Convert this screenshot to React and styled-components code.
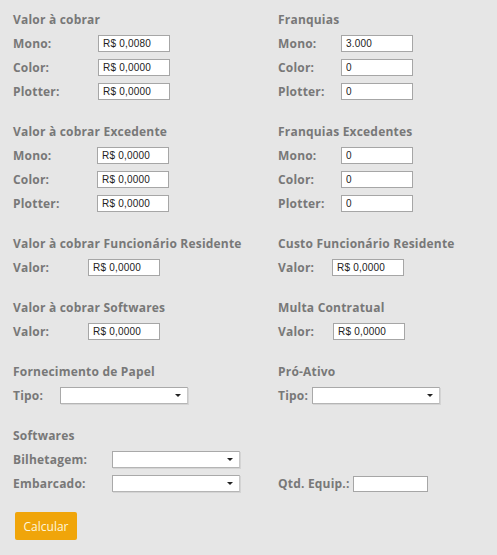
import React from "react";
import styled, { createGlobalStyle } from "styled-components";

const Global = createGlobalStyle`
  html, body { margin: 0; padding: 0; background: #e6e6e6; }
  body { font-family: "Open Sans", "Liberation Sans", sans-serif; }
`;

const Page = styled.div`
  background: #e6e6e6;
  min-height: 555px;
  box-sizing: border-box;
  padding: 12px 0 0 13px;
`;

const Grid = styled.div`
  display: grid;
  grid-template-columns: 265px 200px;
  row-gap: 24px;
`;

const Section = styled.div`
  display: flex;
  flex-direction: column;
`;

const Title = styled.div`
  height: 16px;
  line-height: 16px;
  font-size: 12px;
  font-weight: 700;
  letter-spacing: 0.2px;
  color: #787878;
  white-space: nowrap;
  margin-bottom: 7px;
`;

const Rows = styled.div`
  display: flex;
  flex-direction: column;
  gap: 7px;
`;

const Row = styled.div`
  display: flex;
  align-items: center;
  height: 17px;
`;

const Label = styled.span`
  width: ${(p) => (p.$w ? `${p.$w}px` : "auto")};
  flex: none;
  font-size: 12px;
  font-weight: 700;
  letter-spacing: 0.2px;
  color: #787878;
  white-space: nowrap;
`;

const Input = styled.input`
  box-sizing: border-box;
  width: ${(p) => p.$w || 72}px;
  height: ${(p) => p.$h || 17}px;
  margin: 0;
  border: 1px solid #a6a6a6;
  background: #fff;
  padding: 0 0 0 4px;
  font-family: "Liberation Sans", Arial, sans-serif;
  font-size: 10px;
  letter-spacing: 0.2px;
  color: #222;
  outline: none;
`;

const SelectBox = styled.div`
  position: relative;
  box-sizing: border-box;
  width: 128px;
  height: 17px;
  background: #fff;
  border-top: 1px solid #a9a9a9;
  border-left: 1px solid #a9a9a9;
  border-right: 1px solid #c8c8c8;
  border-bottom: 1px solid #b5b5b5;
  box-shadow: 1px 1px 0 #d4d4d4;
  &::after {
    content: "";
    position: absolute;
    right: 6px;
    top: 6px;
    border-left: 3px solid transparent;
    border-right: 3px solid transparent;
    border-top: 3px solid #222;
  }
`;

const Button = styled.button`
  margin-top: 20px;
  width: 62px;
  height: 28px;
  border: none;
  border-radius: 2px;
  background: #f0a50a;
  color: #fff6dc;
  font-family: "Open Sans", "Liberation Sans", sans-serif;
  font-size: 12px;
  padding: 0;
  margin-left: 2px;
`;

function Field({ label, lw, value, iw, h }) {
  return (
    <Row>
      <Label $w={lw}>{label}</Label>
      <Input $w={iw} $h={h} defaultValue={value} />
    </Row>
  );
}

function SelectField({ label, lw }) {
  return (
    <Row>
      <Label $w={lw}>{label}</Label>
      <SelectBox />
    </Row>
  );
}

export default function App() {
  return (
    <>
      <Global />
      <Page>
        <Grid>
          <Section>
            <Title>Valor à cobrar</Title>
            <Rows>
              <Field label="Mono:" lw={85} value="R$ 0,0080" />
              <Field label="Color:" lw={85} value="R$ 0,0000" />
              <Field label="Plotter:" lw={85} value="R$ 0,0000" />
            </Rows>
          </Section>
          <Section>
            <Title>Franquias</Title>
            <Rows>
              <Field label="Mono:" lw={63} value="3.000" />
              <Field label="Color:" lw={63} value="0" />
              <Field label="Plotter:" lw={63} value="0" />
            </Rows>
          </Section>

          <Section>
            <Title>Valor à cobrar Excedente</Title>
            <Rows>
              <Field label="Mono:" lw={84} value="R$ 0,0000" />
              <Field label="Color:" lw={84} value="R$ 0,0000" />
              <Field label="Plotter:" lw={84} value="R$ 0,0000" />
            </Rows>
          </Section>
          <Section>
            <Title>Franquias Excedentes</Title>
            <Rows>
              <Field label="Mono:" lw={63} value="0" />
              <Field label="Color:" lw={63} value="0" />
              <Field label="Plotter:" lw={63} value="0" />
            </Rows>
          </Section>

          <Section>
            <Title>Valor à cobrar Funcionário Residente</Title>
            <Rows>
              <Field label="Valor:" lw={75} value="R$ 0,0000" />
            </Rows>
          </Section>
          <Section>
            <Title>Custo Funcionário Residente</Title>
            <Rows>
              <Field label="Valor:" lw={54} value="R$ 0,0000" />
            </Rows>
          </Section>

          <Section>
            <Title>Valor à cobrar Softwares</Title>
            <Rows>
              <Field label="Valor:" lw={75} value="R$ 0,0000" />
            </Rows>
          </Section>
          <Section>
            <Title>Multa Contratual</Title>
            <Rows>
              <Field label="Valor:" lw={55} value="R$ 0,0000" />
            </Rows>
          </Section>

          <Section>
            <Title>Fornecimento de Papel</Title>
            <Rows>
              <SelectField label="Tipo:" lw={47} />
            </Rows>
          </Section>
          <Section>
            <Title>Pró-Ativo</Title>
            <Rows>
              <SelectField label="Tipo:" lw={34} />
            </Rows>
          </Section>

          <Section>
            <Title>Softwares</Title>
            <Rows>
              <SelectField label="Bilhetagem:" lw={99} />
              <SelectField label="Embarcado:" lw={99} />
            </Rows>
          </Section>
          <Section>
            <Title>&nbsp;</Title>
            <Rows>
              <Row />
              <Field label="Qtd. Equip.:" lw={75} value="" iw={75} h={16} />
            </Rows>
          </Section>
        </Grid>
        <Button>Calcular</Button>
      </Page>
    </>
  );
}
